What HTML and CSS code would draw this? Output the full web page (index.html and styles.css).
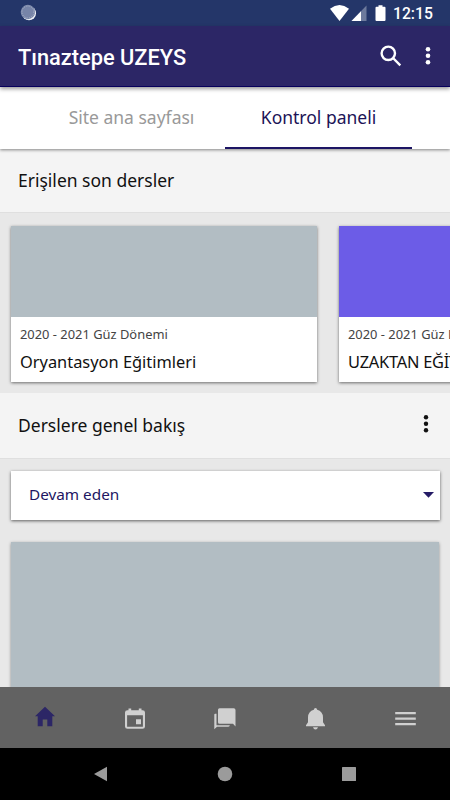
FILE: index.html
```html
<!DOCTYPE html>
<html lang="tr">
<head>
<meta charset="utf-8">
<title>Tınaztepe UZEYS</title>
<link rel="stylesheet" href="styles.css">
</head>
<body>
<div class="screen">
  <div class="status">
    <svg class="sync" viewBox="0 0 18 18"><circle cx="9" cy="9.2" r="7" fill="#eef1f6"/><circle cx="7.900" cy="8" r="7.200" fill="#7784a8"/><circle cx="7.900" cy="8" r="6" fill="none" stroke="#adb6ca" stroke-width="1" stroke-dasharray="1.100 1.256"/></svg>
    <svg class="signals" viewBox="0 0 58 18"><path d="M0 4.8Q9.500-2.600 19 4.800L9.500 17z" fill="#fff"/><path d="M36.500 1.500V17H21.500z" fill="#6d7a9c"/><path d="M31 7.200V17H21.500z" fill="#fff"/><path d="M48.500 1.200h4v1.500h2q1 0 1 1V16q0 1-1 1h-8q-1 0-1-1V3.700q0-1 1-1h2z" fill="#fff"/></svg>
    <span class="clock">12:15</span>
  </div>
  <header class="header">
    <h1 class="title">Tınaztepe UZEYS</h1>
    <svg class="search" viewBox="0 0 22 22"><circle cx="8.300" cy="8.300" r="6.700"/><path d="M13 13l7.300 7.300"/></svg>
    <svg class="dots" viewBox="0 0 6 20"><circle cx="3" cy="3.200" r="2.300"/><circle cx="3" cy="9.700" r="2.300"/><circle cx="3" cy="16.200" r="2.300"/></svg>
  </header>
  <nav class="tabs">
    <div class="tab">Site ana sayfası</div>
    <div class="tab active">Kontrol paneli</div>
  </nav>
  <main class="content">
    <section class="heading first"><h2>Erişilen son dersler</h2></section>
    <div class="courses">
      <article class="card">
        <div class="cover"></div>
        <p class="term">2020 - 2021 Güz Dönemi</p>
        <h3>Oryantasyon Eğitimleri</h3>
      </article>
      <article class="card">
        <div class="cover violet"></div>
        <p class="term">2020 - 2021 Güz Dönemi</p>
        <h3 class="upper">UZAKTAN EĞİTİM</h3>
      </article>
    </div>
    <section class="heading second"><h2>Derslere genel bakış</h2>
      <svg class="dots dark" viewBox="0 0 6 20"><circle cx="3" cy="3.200" r="2.200"/><circle cx="3" cy="9.700" r="2.200"/><circle cx="3" cy="16.200" r="2.200"/></svg>
    </section>
    <div class="select"><span>Devam eden</span><svg class="caret" viewBox="0 0 11 6"><path d="M0 0h11L5.500 5.800z"/></svg></div>
    <div class="large-cover"></div>
  </main>
  <nav class="bottom">
    <div><svg class="home" viewBox="0 0 22 22"><path d="M11 .8L1 10.200h2.700v10h5V13.500h4.600v6.700h5v-10H21z"/></svg></div>
    <div><svg viewBox="0 0 22 22"><path fill-rule="evenodd" d="M4.500.5h2.700v1.700h7.600V.5h2.700v1.700h1q2.500 0 2.500 2.300v14q0 2.300-2.500 2.300h-15Q1 20.800 1 18.500v-14q0-2.300 2.500-2.300h1zM3.100 7.300v11.500h15.800V7.300zM12 11.200h5v5h-5z"/></svg></div>
    <div><svg viewBox="0 0 22 22"><path d="M5.500.3h14.200q1.800 0 1.800 1.800v16.500L19 15.700H5.500q-1.500 0-1.500-1.500V1.800Q4 .3 5.500.3z"/><path d="M.3 6.500q0-.8.900-.8h1.300V17.200h13.300v.1q0 1.400-1.500 1.400H3L.3 21.300z"/></svg></div>
    <div><svg viewBox="0 0 22 22"><path d="M11.500 0q1.500 0 1.700 1.800 5.600 1.400 5.800 7.700v4.700l2 3v1H2v-1l2-3V9.500q.2-6.300 5.800-7.700Q10 0 11.500 0zM9 19.200h5q-.7 2.200-2.500 2.200T9 19.200z"/></svg></div>
    <div><svg viewBox="0 0 22 22"><path d="M1.200 4H21.800v2.200H1.200zM1.200 9.600H21.800v2.200H1.200zM1.200 15H21.800v2.200H1.200z"/></svg></div>
  </nav>
  <div class="android">
    <svg viewBox="0 0 16 16"><path d="M14 .8v14.400L1 8z"/></svg>
    <svg viewBox="0 0 16 16"><circle cx="8" cy="8" r="7.300"/></svg>
    <svg viewBox="0 0 16 16"><rect x="1" y="1" width="14" height="14" rx=".5"/></svg>
  </div>
</div>
</body>
</html>
```
FILE: styles.css
```css
* { box-sizing: border-box; }
body { margin: 0; font-family: "Noto Sans", sans-serif; color: #111; }
h1, h2, h3, p { margin: 0; font-weight: 400; white-space: nowrap; }
svg { display: block; flex: none; }
.screen { width: 450px; height: 800px; overflow: hidden; display: flex; flex-direction: column; }
.status { height: 26px; flex: none; background: #243669; display: flex; align-items: flex-start; padding: 4px 0 0 20px; color: #fff; }
.sync { width: 18px; height: 18px; }
.signals { width: 58px; height: 18px; margin-left: 292px; }
.clock { font: 500 15.7px/20px Roboto, sans-serif; margin-left: 5px; }
.header { height: 61px; flex: none; background: #2c2666; border-bottom: 1px solid #07005c; display: flex; align-items: center; padding: 0 0 0 18px; position: relative; z-index: 3; box-shadow: 0 2px 4px #0006; }
.title { font: 500 21.8px/28px Roboto, sans-serif; color: #fff; width: 361px; padding-top: 4px; }
.search { width: 22px; height: 22px; fill: none; stroke: #fff; stroke-width: 2.4; margin: -1px 24px 0 1px; }
.dots { width: 6px; height: 20px; fill: #fff; }
.header .dots { margin-left: -1px; margin-top: -1px; }
.tabs { height: 62px; flex: none; background: #fff; display: flex; padding: 0 38px; position: relative; z-index: 2; box-shadow: 0 1px 3px #0007; }
.tab { flex: 1; text-align: center; font-size: 17.5px; line-height: 61px; color: #999; }
.active { color: #1c1457; border-bottom: 2px solid #1c1463; }
.content { flex: 1; min-height: 0; overflow: hidden; background: #e8e8e8; }
.heading { background: #f4f4f4; border-bottom: 1px solid #dfdfdf; display: flex; align-items: center; justify-content: space-between; padding: 0 21px 0 18px; }
.heading h2 { font-size: 17.5px; line-height: 26px; margin-top: -1px; }
.first { height: 64px; }
.second { height: 66px; }
.dark { fill: #111; margin-top: -3px; }
.courses { height: 180px; display: flex; gap: 22px; padding: 13px 0 0 11px; overflow: hidden; }
.card { width: 306px; height: 156px; flex: none; background: #fff; box-shadow: 0 1px 3px #0008; }
.cover { height: 91px; background: #b2bdc3; }
.violet { background: #6c5ce7; }
.term { font-size: 12.9px; line-height: 18px; margin: 8px 9px 0; color: #444; }
.card h3 { font-size: 16.4px; line-height: 24px; margin: 7px 9px 0; }
.card .upper { letter-spacing: -.25px; }
.select { height: 49px; margin: 12px 10px 0 11px; padding: 0 6px 0 18px; background: #fff; display: flex; align-items: center; justify-content: space-between; font-size: 15.3px; color: #211562; box-shadow: 0 1px 3px #0009; }
.select span { margin-top: -3px; }
.caret { width: 11px; height: 6px; fill: #251b66; margin-top: -2px; }
.large-cover { height: 160px; margin: 22px 11px 0; background: #b2bdc3; box-shadow: 0 1px 3px #0006; }
.bottom { height: 61px; flex: none; background: #626262; display: grid; grid-template-columns: repeat(5, 1fr); align-items: center; justify-items: center; fill: #d0d0d0; }
.bottom svg { width: 22px; height: 22px; margin-top: 2px; }
.bottom .home { fill: #2c2666; margin-top: -1px; }
.android { height: 52px; flex: none; background: #000; display: flex; justify-content: center; align-items: center; gap: 108px; fill: #9b9b9b; }
.android svg { width: 16px; height: 16px; margin-top: -1px; }
```
